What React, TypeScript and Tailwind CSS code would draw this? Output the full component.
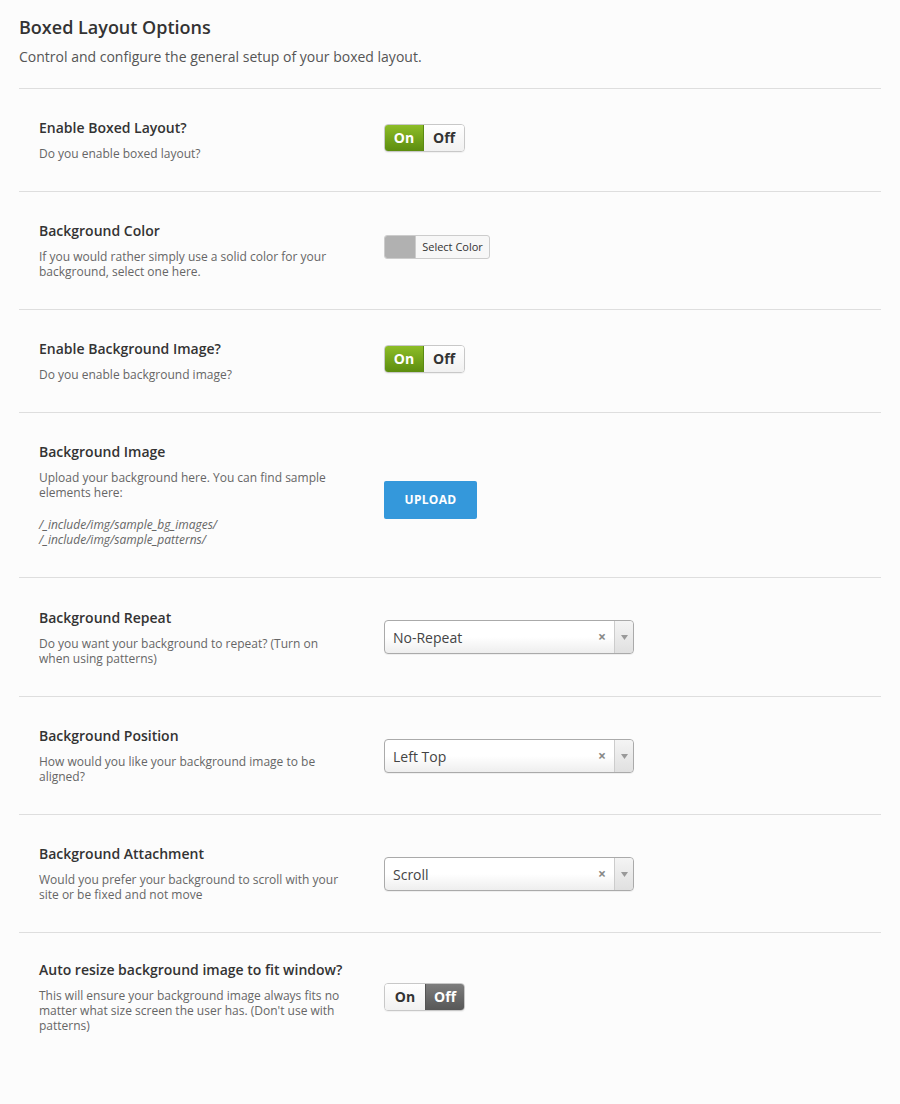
import React from 'react'

type Ctl = { kind: 'toggle'; on: boolean } | { kind: 'color' } | { kind: 'upload' } | { kind: 'select'; value: string }

type Row = {
  title: string
  desc: React.ReactNode
  control: Ctl
  ctlTop: string
  padTop: string
}

function Toggle({ on }: { on: boolean }) {
  return (
    <div className="flex h-[28px] w-[81px] overflow-hidden rounded-[4px] border border-[#c8c8c8] text-[14px] font-bold leading-[26px] shadow-[0_1px_1px_rgba(0,0,0,0.05)]">
      <div
        className={
          on
            ? 'w-[40px] -my-px -ml-px border border-[#5a8a12] bg-gradient-to-b from-[#8dbd27] to-[#5c8d0f] text-center leading-[26px] text-white'
            : 'w-[40px] bg-gradient-to-b from-white to-[#f1f1f1] text-center text-[#333]'
        }
      >
        On
      </div>
      <div
        className={
          on
            ? 'flex-1 bg-gradient-to-b from-white to-[#f1f1f1] text-center text-[#333]'
            : 'flex-1 -my-px -mr-px border border-[#555] bg-gradient-to-b from-[#7d7d7d] to-[#575757] text-center leading-[26px] text-white'
        }
      >
        Off
      </div>
    </div>
  )
}

function ColorPicker() {
  return (
    <div className="flex h-[24px] w-[106px] overflow-hidden rounded-[3px] border border-[#cccccc] bg-[#f7f7f7]">
      <div className="w-[31px] border-r border-[#cccccc] bg-[#b1b1b1]" />
      <div className="flex-1 text-center text-[11px] leading-[22px] text-[#333]">Select Color</div>
    </div>
  )
}

function Upload() {
  return (
    <button className="h-[38px] w-[93px] rounded-[2px] bg-[#3498db] text-[12px] font-bold tracking-[0.3px] text-white">
      UPLOAD
    </button>
  )
}

function Select({ value }: { value: string }) {
  return (
    <div className="flex h-[34px] w-[250px] items-center rounded-[4px] border border-[#aaaaaa] bg-gradient-to-b from-white from-50% to-[#eeeeee] shadow-[0_1px_0_rgba(0,0,0,0.05)]">
      <span className="flex-1 pl-[8px] text-[14px] text-[#444]">{value}</span>
      <span className="pr-[8px] text-[14px] font-bold leading-none text-[#888]">×</span>
      <span className="flex h-full w-[19px] items-center justify-center rounded-r-[4px] border-l border-[#cccccc] bg-gradient-to-b from-[#f4f4f4] to-[#e0e0e0]">
        <svg width="7" height="5" viewBox="0 0 7 5">
          <path d="M0 0h7L3.5 5z" fill="#999" />
        </svg>
      </span>
    </div>
  )
}

function Control({ c }: { c: Ctl }) {
  if (c.kind === 'toggle') return <Toggle on={c.on} />
  if (c.kind === 'color') return <ColorPicker />
  if (c.kind === 'upload') return <Upload />
  return <Select value={c.value} />
}

const rows: Row[] = [
  {
    title: 'Enable Boxed Layout?',
    desc: 'Do you enable boxed layout?',
    control: { kind: 'toggle', on: true },
    ctlTop: 'mt-[6px]',
    padTop: 'pt-[29px]',
  },
  {
    title: 'Background Color',
    desc: 'If you would rather simply use a solid color for your background, select one here.',
    control: { kind: 'color' },
    ctlTop: 'mt-[14px]',
    padTop: 'pt-[29px]',
  },
  {
    title: 'Enable Background Image?',
    desc: 'Do you enable background image?',
    control: { kind: 'toggle', on: true },
    ctlTop: 'mt-[6px]',
    padTop: 'pt-[29px]',
  },
  {
    title: 'Background Image',
    desc: (
      <>
        <p>Upload your background here. You can find sample elements here:</p>
        <p className="mt-[17px] italic">
          /_include/img/sample_bg_images/
          <br />
          /_include/img/sample_patterns/
        </p>
      </>
    ),
    control: { kind: 'upload' },
    ctlTop: 'mt-[39px]',
    padTop: 'pt-[29px]',
  },
  {
    title: 'Background Repeat',
    desc: 'Do you want your background to repeat? (Turn on when using patterns)',
    control: { kind: 'select', value: 'No-Repeat' },
    ctlTop: 'mt-[12px]',
    padTop: 'pt-[30px]',
  },
  {
    title: 'Background Position',
    desc: 'How would you like your background image to be aligned?',
    control: { kind: 'select', value: 'Left Top' },
    ctlTop: 'mt-[13px]',
    padTop: 'pt-[29px]',
  },
  {
    title: 'Background Attachment',
    desc: 'Would you prefer your background to scroll with your site or be fixed and not move',
    control: { kind: 'select', value: 'Scroll' },
    ctlTop: 'mt-[13px]',
    padTop: 'pt-[29px]',
  },
  {
    title: 'Auto resize background image to fit window?',
    desc: "This will ensure your background image always fits no matter what size screen the user has. (Don't use with patterns)",
    control: { kind: 'toggle', on: false },
    ctlTop: 'mt-[23px]',
    padTop: 'pt-[27px]',
  },
]

export default function App() {
  return (
    <div className="min-h-[1104px] bg-[#fcfcfc] font-['Open_Sans',sans-serif] text-[#333]">
      <div className="mx-[19px] pt-[15px]">
        <h2 className="text-[18px] font-semibold leading-[24px] text-[#333]">Boxed Layout Options</h2>
        <p className="mt-[8px] text-[14px] leading-[20px] text-[#555]">
          Control and configure the general setup of your boxed layout.
        </p>
        <div className="mt-[21px]">
          {rows.map(r => (
            <div key={r.title} className={`flex border-t border-[#dedede] pb-[30px] ${r.padTop}`}>
              <div className="ml-[20px] w-[310px]">
                <h4 className="text-[14px] font-semibold leading-[20px] text-[#333]">{r.title}</h4>
                <div className="mt-[8px] text-[12px] leading-[15px] text-[#666]">{r.desc}</div>
              </div>
              <div className={`ml-[35px] ${r.ctlTop}`}>
                <Control c={r.control} />
              </div>
            </div>
          ))}
        </div>
      </div>
    </div>
  )
}
